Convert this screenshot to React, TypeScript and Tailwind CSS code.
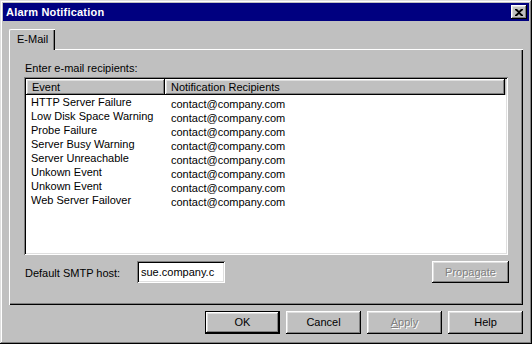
import React from 'react'

const raised =
  'shadow-[inset_-1px_-1px_#000,inset_1px_1px_#fff,inset_-2px_-2px_#808080,inset_2px_2px_#dfdfdf]'
const sunken =
  'shadow-[inset_1px_1px_#808080,inset_-1px_-1px_#fff,inset_2px_2px_#000,inset_-2px_-2px_#dfdfdf]'

const rows = [
  'HTTP Server Failure',
  'Low Disk Space Warning',
  'Probe Failure',
  'Server Busy Warning',
  'Server Unreachable',
  'Unkown Event',
  'Unkown Event',
  'Web Server Failover'
]

const Button: React.FC<{ children: React.ReactNode; disabled?: boolean; primary?: boolean; className?: string }> = ({
  children,
  disabled,
  primary,
  className
}) => (
  <div
    className={`flex items-center justify-center bg-[#c0c0c0] ${
      primary ? 'border border-black ' + raised : raised
    } ${disabled ? 'text-[#808080] [text-shadow:1px_1px_0_#fff]' : 'text-black'} ${className ?? ''}`}
  >
    {children}
  </div>
)

const App: React.FC = () => {
  return (
    <div className="w-[532px] h-[344px] bg-[#c0c0c0] p-[3px] flex flex-col font-['Liberation_Sans',Arial,sans-serif] text-[11px] text-black shadow-[inset_-1px_-1px_#000,inset_1px_1px_#dfdfdf,inset_-2px_-2px_#808080,inset_2px_2px_#fff]">
      {/* title bar */}
      <div className="h-[18px] bg-[#000080] flex items-center justify-between pl-[3px] pr-[2px]">
        <span className="text-white font-bold text-[11px] tracking-[0.2px]">Alarm Notification</span>
        <div className={`w-[16px] h-[14px] bg-[#c0c0c0] flex items-center justify-center ${raised}`}>
          <svg width="8" height="7" viewBox="0 0 8 7">
            <path d="M0 0h2l2 2 2-2h2v1l-3 2.5 3 2.5v1h-2l-2-2-2 2h-2v-1l3-2.5-3-2.5z" fill="#000" />
          </svg>
        </div>
      </div>

      <div className="flex flex-col px-[6px] pt-[8px]">
        {/* tab */}
        <div className="relative z-10 -mb-px w-[46px] h-[21px] bg-[#c0c0c0] border-l border-t border-white rounded-tl-[2px] shadow-[inset_-1px_0_#000,inset_-2px_0_#808080] flex items-center pl-[7px] pb-[2px]">
          E-Mail
        </div>

        {/* panel */}
        <div className="w-[514px] h-[256px] flex flex-col pl-[15px] pr-[13px] pt-[12px] shadow-[inset_1px_1px_#fff,inset_-1px_-1px_#000,inset_-2px_-2px_#808080]">
          <div className="leading-[14px] pl-px">Enter e-mail recipients:</div>

          <div className={`mt-[2px] w-[484px] h-[178px] bg-white p-[2px] flex flex-col ${sunken}`}>
            <div className="flex h-[16px] bg-[#c0c0c0]">
              <div className={`w-[139px] pl-[6px] flex items-center ${raised}`}>Event</div>
              <div className={`w-[340px] pl-[6px] flex items-center ${raised}`}>Notification Recipients</div>
            </div>
            <div className="flex flex-col pt-px">
              {rows.map((r, i) => (
                <div key={i} className="flex h-[14px] items-start leading-[13px]">
                  <span className="w-[145px] pl-[5px]">{r}</span>
                  <span className="mt-[2px]">contact@company.com</span>
                </div>
              ))}
            </div>
          </div>

          <div className="flex items-center mt-[6px] h-[22px]">
            <span className="w-[113px] pl-px pt-[2px]">Default SMTP host:</span>
            <div className={`w-[88px] h-[22px] bg-white flex items-center pl-[4px] overflow-hidden whitespace-nowrap ${sunken}`}>
              sue.company.c
            </div>
            <div className="flex-1" />
            <Button disabled className="w-[77px] h-[22px] mr-[1px]">
              Propagate
            </Button>
          </div>
        </div>

        {/* buttons */}
        <div className="flex justify-end gap-[6px] mt-[6px] pr-[0px]">
          <Button primary className="w-[75px] h-[23px]">
            OK
          </Button>
          <Button className="w-[75px] h-[23px]">Cancel</Button>
          <Button disabled className="w-[75px] h-[23px]">
            <span>
              <span className="underline">A</span>pply
            </span>
          </Button>
          <Button className="w-[75px] h-[23px]">Help</Button>
        </div>
      </div>
    </div>
  )
}

export default App
